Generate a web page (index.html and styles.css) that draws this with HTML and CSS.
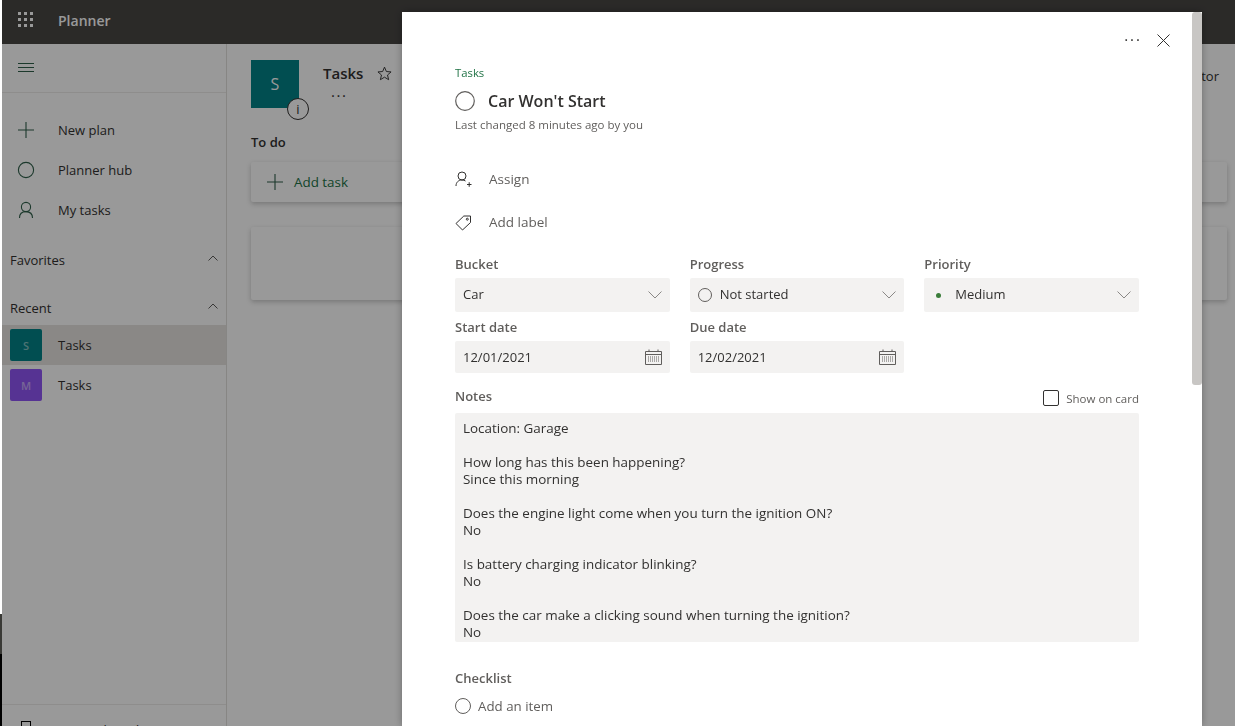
FILE: index.html
```html
<!DOCTYPE html>
<html lang="en">
<head>
    <meta charset="UTF-8">
    <title>Planner</title>
    <link rel="stylesheet" href="styles.css">
</head>
<body>
    <div class="app">
        <header class="topbar">
            <svg class="waffle" width="16" height="16" viewBox="0 0 16 16" fill="#fff">
                <rect x="0" y="0" width="3" height="3"/><rect x="6" y="0" width="3" height="3"/><rect x="12" y="0" width="3" height="3"/>
                <rect x="0" y="6" width="3" height="3"/><rect x="6" y="6" width="3" height="3"/><rect x="12" y="6" width="3" height="3"/>
                <rect x="0" y="12" width="3" height="3"/><rect x="6" y="12" width="3" height="3"/><rect x="12" y="12" width="3" height="3"/>
            </svg>
            <span class="app-name">Planner</span>
        </header>
        <div class="columns">
            <nav class="sidebar">
                <div class="burger-row">
                    <svg width="16" height="10" viewBox="0 0 16 10" stroke="#2f5f4a" fill="none"><path d="M0 .5h16M0 4.5h16M0 8.5h16"/></svg>
                </div>
                <ul class="nav-list">
                    <li class="nav-item">
                        <svg class="nav-icon" width="18" height="18" viewBox="0 0 18 18" fill="none" stroke="#2f5f4a" stroke-width="1.1"><path d="M9 1v16M1 9h16"/></svg>
                        New plan
                    </li>
                    <li class="nav-item">
                        <svg class="nav-icon" width="18" height="18" viewBox="0 0 18 18" fill="none" stroke="#2f5f4a" stroke-width="1.1"><circle cx="9" cy="9" r="7.6"/></svg>
                        Planner hub
                    </li>
                    <li class="nav-item">
                        <svg class="nav-icon" width="18" height="18" viewBox="0 0 18 18" fill="none" stroke="#2f5f4a" stroke-width="1.1"><circle cx="9" cy="6" r="4.6"/><path d="M2.5 17c0-4 2.6-6.4 6.5-6.4s6.5 2.4 6.5 6.4"/></svg>
                        My tasks
                    </li>
                </ul>
                <div class="section-head section-favorites">
                    Favorites
                    <svg class="section-chev" width="10" height="6" viewBox="0 0 10 6" fill="none" stroke="#605e5c"><path d="M.5 5.5L5 1l4.5 4.5"/></svg>
                </div>
                <div class="section-head section-recent">
                    Recent
                    <svg class="section-chev" width="10" height="6" viewBox="0 0 10 6" fill="none" stroke="#605e5c"><path d="M.5 5.5L5 1l4.5 4.5"/></svg>
                </div>
                <div class="plan-row selected"><span class="plan-badge teal">S</span>Tasks</div>
                <div class="plan-row"><span class="plan-badge purple">M</span>Tasks</div>
                <div class="sidebar-foot">
                    <svg width="10" height="14" viewBox="0 0 10 14" fill="none" stroke="#000"><rect x=".5" y=".5" width="9" height="13"/></svg>
                    <span>Create Shared</span>
                </div>
            </nav>
            <main class="board">
                <div class="plan-head">
                    <div class="plan-logo">S
                        <span class="info-badge">i</span>
                    </div>
                    <div class="plan-title-wrap">
                        <div class="plan-title">Tasks
                            <svg class="star" width="15" height="15" viewBox="0 0 16 16" fill="none" stroke="#333"><path d="M8 1.2l2 4.7 5 .4-3.8 3.300 1.200 5L8 11.900l-4.400 2.700 1.200-5L1 6.300l5-.4z"/></svg>
                        </div>
                        <div class="plan-more">···</div>
                    </div>
                    <div class="plan-filter">Creator</div>
                </div>
                <h2 class="bucket-title">To do</h2>
                <div class="add-task">
                    <svg width="16" height="16" viewBox="0 0 16 16" fill="none" stroke="#2f5f4a" stroke-width="1.1"><path d="M8 0v16M0 8h16"/></svg>
                    Add task
                </div>
                <div class="task-card"></div>
            </main>
        </div>
    </div>

    <div class="backdrop"></div>
    <div class="edge-strip"></div>

    <section class="task-dialog">
        <div class="dialog-scroll"><div class="dialog-thumb"></div></div>
        <div class="dialog-tools">
            <span class="tool-dots">···</span>
            <svg width="13" height="13" viewBox="0 0 13 13" fill="none" stroke="#323130"><path d="M.5.500l12 12M12.500.500l-12 12"/></svg>
        </div>
        <div class="crumb">Tasks</div>
        <div class="task-title-row">
            <svg width="20" height="20" viewBox="0 0 20 20" fill="none" stroke="#605e5c" stroke-width="1.2"><circle cx="10" cy="10" r="9.300"/></svg>
            <h1 class="task-title">Car Won't Start</h1>
        </div>
        <div class="changed">Last changed 8 minutes ago by you</div>

        <div class="action-row assign">
            <svg width="17" height="17" viewBox="0 0 17 17" fill="none" stroke="#323130"><circle cx="7" cy="5" r="4"/><path d="M1 15c0-3.600 2.400-6 6-6 1.400 0 2.600.4 3.500 1M12 13.500h4.500M14.200 11.200v4.600"/></svg>
            Assign
        </div>
        <div class="action-row label">
            <svg width="17" height="17" viewBox="0 0 17 17" fill="none" stroke="#323130"><path d="M1 9.500L8.800 2H15.500v6.500L7.500 16z"/><circle cx="12.300" cy="5.200" r="1"/></svg>
            Add label
        </div>

        <div class="field-grid">
            <div class="field">
                <label class="field-label">Bucket</label>
                <div class="select-box">
                    <span class="select-text">Car</span>
                    <svg class="chev" width="14" height="8" viewBox="0 0 14 8" fill="none" stroke="#8a8886"><path d="M.5.500L7 7l6.500-6.500"/></svg>
                </div>
            </div>
            <div class="field">
                <label class="field-label">Progress</label>
                <div class="select-box">
                    <svg class="status-ring" width="14" height="14" viewBox="0 0 14 14" fill="none" stroke="#605e5c"><circle cx="7" cy="7" r="6.500"/></svg>
                    <span class="select-text">Not started</span>
                    <svg class="chev" width="14" height="8" viewBox="0 0 14 8" fill="none" stroke="#8a8886"><path d="M.5.500L7 7l6.500-6.500"/></svg>
                </div>
            </div>
            <div class="field">
                <label class="field-label">Priority</label>
                <div class="select-box">
                    <span class="priority-dot"></span>
                    <span class="select-text">Medium</span>
                    <svg class="chev" width="14" height="8" viewBox="0 0 14 8" fill="none" stroke="#8a8886"><path d="M.5.500L7 7l6.500-6.500"/></svg>
                </div>
            </div>
            <div class="field">
                <label class="field-label">Start date</label>
                <div class="date-box">
                    <span class="date-text">12/01/2021</span>
                    <svg class="calendar" width="17" height="16" viewBox="0 0 17 16" fill="none" stroke="#605e5c"><path d="M.5 2.500h16v13H.5zM.5 5.500h16M4 .5v2M13 .5v2"/><path stroke-dasharray="1 1" d="M3 8h11M3 10h11M3 12h11"/></svg>
                </div>
            </div>
            <div class="field">
                <label class="field-label">Due date</label>
                <div class="date-box">
                    <span class="date-text">12/02/2021</span>
                    <svg class="calendar" width="17" height="16" viewBox="0 0 17 16" fill="none" stroke="#605e5c"><path d="M.5 2.500h16v13H.5zM.5 5.500h16M4 .5v2M13 .5v2"/><path stroke-dasharray="1 1" d="M3 8h11M3 10h11M3 12h11"/></svg>
                </div>
            </div>
        </div>

        <div class="notes-head">
            <span class="field-label">Notes</span>
            <span class="show-card"><span class="checkbox"></span>Show on card</span>
        </div>
        <div class="notes-box">Location: Garage

How long has this been happening?
Since this morning

Does the engine light come when you turn the ignition ON?
No

Is battery charging indicator blinking?
No

Does the car make a clicking sound when turning the ignition?
No</div>

        <div class="field-label checklist-label">Checklist</div>
        <div class="check-add">
            <svg width="16" height="16" viewBox="0 0 16 16" fill="none" stroke="#605e5c"><circle cx="8" cy="8" r="7.500"/></svg>
            Add an item
        </div>
    </section>
</body>
</html>
```
FILE: styles.css
```css
* {
    box-sizing: border-box;
}

html, body {
    height: 100%;
}

body {
    margin: 0;
    overflow: hidden;
    background: #fff;
    font-family: 'Open Sans', 'Noto Sans', sans-serif;
    font-size: 13px;
    color: #323130;
}

.app {
    display: flex;
    flex-direction: column;
    height: 726px;
    margin-left: 2px;
}

.topbar {
    display: flex;
    align-items: center;
    height: 44px;
    flex: none;
    background: #484644;
    color: #fff;
    padding: 0 0 4px 16px;
}

.waffle {
    margin-right: 24px;
}

.app-name {
    font-size: 14px;
    font-weight: 600;
}

.columns {
    display: flex;
    flex: 1;
    min-height: 0;
}

/* left nav */
.sidebar {
    display: flex;
    flex-direction: column;
    width: 225px;
    flex: none;
    background: #fff;
    border-right: 1px solid #e1dfdd;
    overflow: hidden;
}

.burger-row {
    display: flex;
    align-items: center;
    height: 49px;
    flex: none;
    padding-left: 16px;
    border-bottom: 1px solid #edebe9;
}

.nav-list {
    list-style: none;
    margin: 17px 0 0;
    padding: 0;
}

.nav-item {
    display: flex;
    align-items: center;
    height: 40px;
    padding-left: 15px;
}

.nav-icon {
    margin-right: 23px;
}

.section-head {
    display: flex;
    align-items: center;
    justify-content: space-between;
    height: 24px;
    padding: 0 8px;
}

.section-chev {
    margin-top: -4px;
}

.section-favorites {
    margin-top: 18px;
}

.section-recent {
    margin-top: 24px;
    margin-bottom: 5px;
}

.plan-row {
    display: flex;
    align-items: center;
    height: 40px;
    padding-left: 8px;
}

.plan-row.selected {
    background: #e6e3e0;
}

.plan-badge {
    display: flex;
    align-items: center;
    justify-content: center;
    width: 32px;
    height: 32px;
    margin-right: 16px;
    border-radius: 2px;
    color: rgba(255, 255, 255, 0.5);
    font-size: 11px;
    font-weight: 600;
}

.teal {
    background: #038387;
}

.purple {
    background: #8f55f5;
}

.sidebar-foot {
    display: flex;
    align-items: flex-start;
    gap: 22px;
    margin-top: auto;
    height: 22px;
    flex: none;
    padding: 16px 0 0 19px;
    border-top: 1px solid #edebe9;
    line-height: 18px;
    white-space: nowrap;
}

/* board behind the dialog */
.board {
    flex: 1;
    padding: 16px 8px 0 24px;
    background: #fff;
}

.plan-head {
    display: flex;
    align-items: flex-start;
    height: 70px;
}

.plan-logo {
    position: relative;
    display: flex;
    align-items: center;
    justify-content: center;
    width: 48px;
    height: 48px;
    flex: none;
    background: #038387;
    color: #fff;
    font-size: 16px;
}

.info-badge {
    position: absolute;
    right: -10px;
    bottom: -12px;
    display: flex;
    align-items: center;
    justify-content: center;
    width: 22px;
    height: 22px;
    border: 1px solid #323130;
    border-radius: 50%;
    background: #fff;
    color: #323130;
    font-size: 13px;
}

.plan-title-wrap {
    margin-left: 24px;
}

.plan-title {
    display: flex;
    align-items: center;
    gap: 14px;
    font-size: 15px;
    font-weight: 600;
    height: 26px;
}

.plan-more {
    margin: 2px 0 0 8px;
    line-height: 14px;
    font-size: 15px;
    letter-spacing: 1.5px;
}

.plan-filter {
    margin: 0 8px 0 auto;
    padding-top: 7px;
}

.bucket-title {
    margin: 0;
    font-size: 13px;
    font-weight: 600;
    line-height: 20px;
    height: 30px;
    padding-top: 2px;
}

.add-task {
    display: flex;
    align-items: center;
    gap: 11px;
    height: 40px;
    margin-top: 2px;
    padding-left: 16px;
    background: #fff;
    border-radius: 2px;
    box-shadow: 0 2px 5px rgba(0, 0, 0, 0.22);
    font-size: 13.4px;
    color: #217346;
}

.task-card {
    height: 73px;
    margin-top: 25px;
    background: #fff;
    border-radius: 2px;
    box-shadow: 0 2px 5px rgba(0, 0, 0, 0.22);
}

/* modal layer */
.backdrop {
    position: fixed;
    inset: 0 0 0 2px;
    background: rgba(0, 0, 0, 0.4);
}

.edge-strip {
    position: fixed;
    left: 0;
    top: 614px;
    bottom: 0;
    width: 2px;
    background: linear-gradient(#3a3a36 0 40px, #000 40px);
}

.task-dialog {
    position: fixed;
    left: 402px;
    top: 12px;
    width: 800px;
    height: 714px;
    padding: 0 63px 0 53px;
    background: #fff;
    overflow: hidden;
    box-shadow: 0 0 8px rgba(0, 0, 0, 0.3);
}

.dialog-scroll {
    position: absolute;
    right: 0;
    top: 0;
    width: 10px;
    height: 100%;
}

.dialog-thumb {
    height: 373px;
    background: #c8c6c4;
    border-radius: 3px;
}

.dialog-tools {
    display: flex;
    align-items: center;
    justify-content: flex-end;
    gap: 15px;
    height: 14px;
    margin: 21px -31px 0 0;
    color: #323130;
}

.tool-dots {
    margin-top: -2px;
    font-size: 15px;
    letter-spacing: 2px;
}

.crumb {
    font-size: 11.3px;
    line-height: 16px;
    margin-top: 18px;
    color: #217346;
}

.task-title-row {
    display: flex;
    align-items: center;
    gap: 13px;
    height: 24px;
    margin-top: 8px;
}

.task-title {
    margin: 0;
    font-size: 16px;
    font-weight: 600;
    color: #323130;
}

.changed {
    margin-top: 4px;
    font-size: 11.5px;
    line-height: 16px;
    color: #605e5c;
}

.action-row {
    display: flex;
    align-items: center;
    gap: 17px;
    color: #605e5c;
    font-size: 13.5px;
    height: 24px;
}

.action-row.assign {
    margin-top: 34px;
}

.action-row.label {
    margin-top: 19px;
}

.field-grid {
    display: grid;
    grid-template-columns: repeat(3, 1fr);
    column-gap: 20px;
    row-gap: 5px;
    margin-top: 20px;
}

.field-label {
    display: block;
    height: 24px;
    line-height: 20px;
    font-size: 13px;
    font-weight: 600;
    color: #605e5c;
}

.select-box,
.date-box {
    display: flex;
    align-items: center;
    padding: 0 8px;
    background: #f3f2f1;
    border-radius: 2px;
    color: #323130;
}

.select-box {
    height: 34px;
}

.date-box {
    height: 32px;
}

.select-text {
    flex: 1;
    padding-bottom: 2px;
}

.date-text {
    flex: 1;
}

.status-ring {
    margin-right: 8px;
}

.priority-dot {
    width: 5px;
    height: 5px;
    margin: 0 14px 0 4px;
    border-radius: 50%;
    background: #3a7d3a;
}

.notes-head {
    display: flex;
    align-items: flex-start;
    justify-content: space-between;
    height: 27px;
    margin-top: 13px;
}

.show-card {
    display: flex;
    align-items: center;
    gap: 7px;
    margin-top: 4px;
    font-size: 11.5px;
    color: #605e5c;
}

.checkbox {
    width: 16px;
    height: 16px;
    border: 1px solid #323130;
    border-radius: 2px;
}

.notes-box {
    height: 229px;
    padding: 7px 8px 0;
    background: #f3f2f1;
    border-radius: 2px;
    font-size: 13.45px;
    line-height: 17px;
    color: #323130;
    white-space: pre-line;
    overflow: hidden;
}

.checklist-label {
    margin-top: 26px;
}

.check-add {
    display: flex;
    align-items: center;
    gap: 7px;
    margin-top: 5px;
    font-size: 13.3px;
    color: #605e5c;
}
```
